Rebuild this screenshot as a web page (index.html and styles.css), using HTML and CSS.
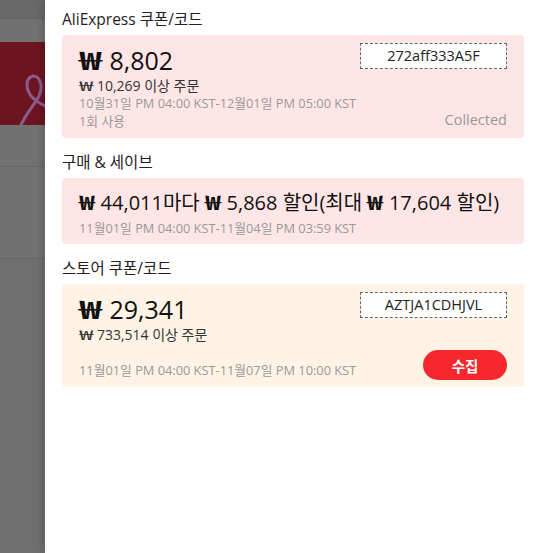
FILE: index.html
```html
<!DOCTYPE html>
<html lang="ko">

<head>
    <meta charset="UTF-8">
    <meta name="viewport" content="width=device-width, initial-scale=1.0">
    <title>쿠폰</title>
    <link rel="stylesheet" href="styles.css">
</head>

<body>

    <div class="screen">
        <!-- Darkened page behind the drawer -->
        <div class="backdrop">
            <div class="bd-top"></div>
            <div class="bd-gap"></div>
            <div class="bd-banner">
                <svg class="ribbon" width="45" height="83" viewBox="0 0 45 83">
                    <path d="M21 83 C27 70, 35 62, 39 54 C43 46, 41 34, 33 34 C25 36, 25 48, 33 56 C37 60, 41 62, 45 64"
                        fill="none" stroke="#8a5b8c" stroke-width="3" stroke-linecap="round" />
                </svg>
            </div>
            <div class="bd-row"></div>
            <div class="bd-row tall"></div>
            <div class="bd-rest"></div>
        </div>

        <!-- Coupon drawer -->
        <div class="drawer">

            <div class="section">
                <div class="section-title">AliExpress 쿠폰/코드</div>
                <div class="card pink">
                    <div class="card-head">
                        <div class="amount"><span class="won">₩</span> 8,802</div>
                        <div class="code">272aff333A5F</div>
                    </div>
                    <div class="condition"><span class="won thin">₩</span> 10,269 이상 주문</div>
                    <div class="date">10월31일 PM 04:00 KST-12월01일 PM 05:00 KST</div>
                    <div class="card-foot">
                        <div class="date">1회 사용</div>
                        <div class="status">Collected</div>
                    </div>
                </div>
            </div>

            <div class="section">
                <div class="section-title">구매 &amp; 세이브</div>
                <div class="card pink compact">
                    <div class="deal"><span class="won">₩</span> 44,011마다 <span class="won">₩</span> 5,868 할인(최대 <span class="won">₩</span> 17,604 할인)</div>
                    <div class="date">11월01일 PM 04:00 KST-11월04일 PM 03:59 KST</div>
                </div>
            </div>

            <div class="section">
                <div class="section-title">스토어 쿠폰/코드</div>
                <div class="card cream">
                    <div class="card-head">
                        <div class="amount"><span class="won">₩</span> 29,341</div>
                        <div class="code">AZTJA1CDHJVL</div>
                    </div>
                    <div class="condition"><span class="won thin">₩</span> 733,514 이상 주문</div>
                    <div class="card-foot action">
                        <div class="date">11월01일 PM 04:00 KST-11월07일 PM 10:00 KST</div>
                        <button class="collect">수집</button>
                    </div>
                </div>
            </div>

        </div>
    </div>

</body>

</html>
```

FILE: styles.css
```css
* {
    box-sizing: border-box;
}

html,
body {
    margin: 0;
    height: 100%;
}

body {
    font-family: "Open Sans", "Noto Sans CJK KR", sans-serif;
    color: #222;
}

.screen {
    display: flex;
    height: 100%;
}

/* Page behind the overlay */
.backdrop {
    width: 45px;
    flex-shrink: 0;
    display: flex;
    flex-direction: column;
    background: #6f6f6f;
}

.bd-top {
    height: 19px;
    background: #696969;
    border-bottom: 1px solid #646464;
}

.bd-gap {
    height: 23px;
    background: #717171;
}

.bd-banner {
    height: 83px;
    background: #6c1521;
    overflow: hidden;
}

.ribbon {
    display: block;
}

.bd-row {
    height: 42px;
    border-bottom: 1px solid #676767;
    background: #717171;
}

.bd-row.tall {
    height: 92px;
}

.bd-rest {
    flex: 1;
    background: #6f6f6f;
}

/* Drawer */
.drawer {
    flex: 1;
    background: #fff;
    padding: 9px 10px 0 17px;
    box-shadow: -4px 0 6px rgba(0, 0, 0, 0.12);
}

.section + .section {
    margin-top: 14px;
}

.section-title {
    font-size: 15.5px;
    line-height: 20px;
    margin-bottom: 6px;
    color: #222;
}

.card {
    border-radius: 4px;
    padding: 8px 17px 9px;
}

.card.pink {
    background: #ffe6e6;
}

.card.cream {
    background: #fff3e6;
}

.card.compact {
    padding: 10px 17px 8px;
}

.card-head {
    display: flex;
    justify-content: space-between;
    align-items: flex-start;
}

.won {
    display: inline-block;
    width: 0.96em;
    font-family: "Noto Sans CJK KR", sans-serif;
    font-weight: bold;
    line-height: 1;
    transform: scaleX(1.55);
    transform-origin: left center;
}

.won.thin {
    width: 0.94em;
    font-weight: normal;
    transform: scaleX(1.85);
    margin-right: 0.08em;
}

.deal .won {
    width: 0.82em;
    transform: scaleX(1.35);
}

.amount {
    font-size: 25px;
    line-height: 34px;
    color: #111;
}

.code {
    width: 147px;
    height: 26px;
    line-height: 24px;
    border: 1px dashed #666;
    background: #fff;
    text-align: center;
    font-size: 14.5px;
    color: #222;
}

.condition {
    font-size: 14px;
    line-height: 18px;
    color: #333;
}

.date {
    font-size: 12.8px;
    line-height: 16px;
    color: #999;
}

.card-foot {
    display: flex;
    justify-content: space-between;
    align-items: flex-end;
}

.status {
    font-size: 14.5px;
    line-height: 18px;
    color: #999;
}

.card-foot.action {
    margin-top: 6px;
    margin-bottom: -2px;
}

.card-foot.action .date {
    margin-bottom: 2px;
}

.collect {
    width: 84px;
    height: 30px;
    border: none;
    border-radius: 15px;
    background: #f7282d;
    color: #fff;
    font-family: inherit;
    font-size: 14.5px;
    font-weight: bold;
}

.deal {
    font-size: 20px;
    line-height: 30px;
    color: #111;
}

.compact .date {
    margin-top: 2px;
}
```
